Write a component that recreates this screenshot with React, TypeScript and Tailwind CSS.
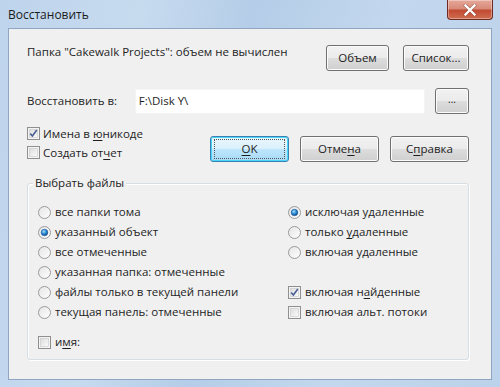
import React from "react";

const U = ({ children }: { children: React.ReactNode }) => (
  <span className="underline underline-offset-[2px] decoration-[1px]">{children}</span>
);

function Radio({ checked }: { checked?: boolean }) {
  return (
    <svg width="13" height="13" viewBox="0 0 13 13" className="shrink-0">
      <defs>
        <linearGradient id="rb" x1="0" y1="0" x2="1" y2="1">
          <stop offset="0" stopColor="#e4e4e4" />
          <stop offset="1" stopColor="#ffffff" />
        </linearGradient>
        <radialGradient id="rd" cx="0.4" cy="0.35" r="0.7">
          <stop offset="0" stopColor="#a8e0fb" />
          <stop offset="0.5" stopColor="#2a8bd3" />
          <stop offset="1" stopColor="#0d3e78" />
        </radialGradient>
      </defs>
      <circle cx="6.5" cy="6.5" r="6" fill="url(#rb)" stroke="#9a9a9a" strokeWidth="1" />
      {checked && <circle cx="6.5" cy="6.5" r="3.3" fill="url(#rd)" stroke="#1e5b9e" strokeWidth="0.6" />}
    </svg>
  );
}

function Check({ checked }: { checked?: boolean }) {
  return (
    <svg width="13" height="13" viewBox="0 0 13 13" className="shrink-0">
      <defs>
        <linearGradient id="cb" x1="0" y1="0" x2="1" y2="1">
          <stop offset="0" stopColor="#dcdcdc" />
          <stop offset="1" stopColor="#fbfbfb" />
        </linearGradient>
      </defs>
      <rect x="0.5" y="0.5" width="12" height="12" fill="#f4f4f4" stroke="#8f8f8f" />
      <rect x="2.5" y="2.5" width="8" height="8" fill="url(#cb)" stroke="#c9c9c9" strokeWidth="0.6" />
      {checked && (
        <path d="M3.2 6.6 L5.4 9 L9.8 3" fill="none" stroke="#4a5f97" strokeWidth="1.6" />
      )}
    </svg>
  );
}

function Btn({
  children,
  className = "",
  focused,
}: {
  children: React.ReactNode;
  className?: string;
  focused?: boolean;
}) {
  return (
    <div
      className={
        "h-[26px] rounded-[3px] border flex items-center justify-center text-[#1e1e1e] " +
        (focused
          ? "border-[#3c7fb1] bg-[linear-gradient(#eaf6fd_0%,#d9f0fc_50%,#bee6fd_51%,#a7d9f5_100%)] shadow-[inset_0_0_0_1px_#48d6fa]"
          : "border-[#707070] bg-[linear-gradient(#f2f2f2_0%,#ebebeb_50%,#dddddd_51%,#cfcfcf_100%)] shadow-[inset_0_0_0_1px_#fcfcfc]") +
        " " +
        className
      }
    >
      {focused ? (
        <span className="px-[6px] py-[1px] outline outline-1 outline-dotted outline-[#555] -outline-offset-1 flex-1 mx-[3px] text-center">
          {children}
        </span>
      ) : (
        children
      )}
    </div>
  );
}

function Opt({ kind, checked, children }: { kind: "r" | "c"; checked?: boolean; children: React.ReactNode }) {
  return (
    <div className="h-[20px] flex items-center gap-[4px]">
      {kind === "r" ? <Radio checked={checked} /> : <Check checked={checked} />}
      <span>{children}</span>
    </div>
  );
}

export default function App() {
  return (
    <div
      className="w-[500px] h-[387px] flex flex-col text-[11.5px] text-[#1e1e1e] overflow-hidden bg-[linear-gradient(100deg,#bed4ec_0%,#c7dbef_25%,#b5cde8_45%,#c3d8ee_70%,#bcd2ea_100%)]"
      style={{ fontFamily: '"Open Sans", "Noto Sans", sans-serif' }}
    >
      {/* title bar */}
      <div className="h-[28px] flex items-start justify-between shrink-0">
        <div className="pl-[8px] pt-[7px] leading-[16px] text-[#1b1b1b] text-[12px]">Восстановить</div>
        <div className="mr-[7px] w-[46px] h-[20px] rounded-b-[4px] border border-t-0 border-[#6e2b22] bg-[linear-gradient(#e6a89a_0%,#d88a78_45%,#c24b33_55%,#cf6d50_100%)] shadow-[inset_0_0_0_1px_rgba(255,255,255,0.35)] flex items-center justify-center">
          <svg width="14" height="12" viewBox="0 0 14 12">
            <path d="M2.5 1.5 L11.5 10.5 M11.5 1.5 L2.5 10.5" stroke="#4a1a12" strokeWidth="3.6" strokeLinecap="square" opacity="0.35" />
            <path d="M2.5 1.5 L11.5 10.5 M11.5 1.5 L2.5 10.5" stroke="#ffffff" strokeWidth="2.4" strokeLinecap="square" />
          </svg>
        </div>
      </div>

      {/* client area */}
      <div className="mx-[8px] h-[352px] border border-[#8fa5c2] bg-[#f0f0f0] pl-[18px] pr-[22px] pt-[16px] flex flex-col">
        {/* row 1 */}
        <div className="flex items-start">
          <div className="flex-1 pt-[0px] leading-[14px]">Папка "Cakewalk Projects": объем не вычислен</div>
          <Btn className="w-[63px]">Объем</Btn>
          <Btn className="w-[66px] ml-[14px]">Список...</Btn>
        </div>

        {/* row 2 */}
        <div className="flex items-center mt-[17px]">
          <div className="w-[108px]">Восстановить в:</div>
          <div className="w-[291px] h-[25px] bg-white border border-[#f4f4f4] flex items-center pl-[3px]">F:\Disk Y\</div>
          <Btn className="w-[34px] h-[25px] ml-[10px] text-[10px] !items-end pb-[6px]">...</Btn>
        </div>

        {/* row 3 */}
        <div className="flex mt-[11px]">
          <div className="flex-1 flex flex-col -mt-[1px]">
            <div className="h-[19px] flex items-center gap-[3px]">
              <Check checked />
              <span>
                Имена в <U>ю</U>никоде
              </span>
            </div>
            <div className="h-[19px] flex items-center gap-[3px]">
              <Check />
              <span>
                Создать от<U>ч</U>ет
              </span>
            </div>
          </div>
          <div className="flex mt-[11px] gap-[11px]">
            <Btn focused className="w-[79px]">
              <U>O</U>K
            </Btn>
            <Btn className="w-[79px]">
              Отме<U>н</U>а
            </Btn>
            <Btn className="w-[79px]">
              С<U>п</U>равка
            </Btn>
          </div>
        </div>

        {/* group box */}
        <div className="relative mt-[21px] w-[442px] h-[177px] border border-[#d5dfe5] rounded-[3px] shadow-[inset_1px_1px_0_#ffffff,1px_1px_0_#ffffff]">
          <div className="absolute -top-[9px] left-[5px] px-[2px] bg-[#f0f0f0] leading-[16px]">Выбрать файлы</div>
          <div className="flex pl-[10px] pt-[18px]">
            <div className="w-[250px] flex flex-col">
              <Opt kind="r">все папки тома</Opt>
              <Opt kind="r" checked>указанный объект</Opt>
              <Opt kind="r">все отмеченные</Opt>
              <Opt kind="r">указанная папка: отмеченные</Opt>
              <Opt kind="r">файлы только в текущей панели</Opt>
              <Opt kind="r">текущая панель: отмеченные</Opt>
              <div className="h-[10px]" />
              <Opt kind="c">
                и<U>м</U>я:
              </Opt>
            </div>
            <div className="flex flex-col">
              <Opt kind="r" checked>исключая удаленные</Opt>
              <Opt kind="r">
                только <U>у</U>даленные
              </Opt>
              <Opt kind="r">включая удаленные</Opt>
              <div className="h-[20px]" />
              <Opt kind="c" checked>
                включая н<U>а</U>йденные
              </Opt>
              <Opt kind="c">включая альт. потоки</Opt>
            </div>
          </div>
        </div>
      </div>
    </div>
  );
}
